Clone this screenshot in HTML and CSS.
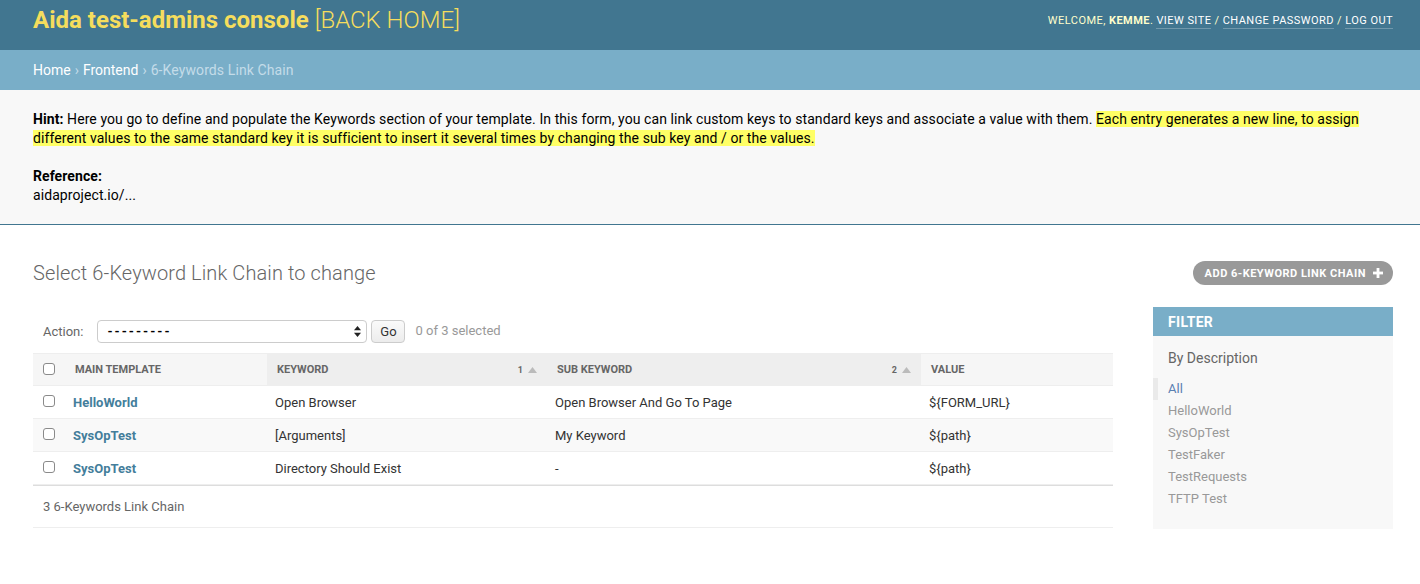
FILE: index.html
```html
<!DOCTYPE html>
<html>
<head>
<meta charset="utf-8">
<title>Select 6-Keyword Link Chain to change</title>
<link rel="stylesheet" href="styles.css">
</head>
<body>
<header class="header">
  <div class="branding"><span class="brand-bold">Aida test-admins console</span> <span class="brand-light">[BACK HOME]</span></div>
  <div class="user-tools">WELCOME, <strong>KEMME</strong>. <a href="#">VIEW SITE</a> / <a href="#">CHANGE PASSWORD</a> / <a href="#">LOG OUT</a></div>
</header>
<nav class="breadcrumbs"><a href="#">Home</a> › <a href="#">Frontend</a> › <span class="crumb-current">6-Keywords Link Chain</span></nav>
<section class="hint">
  <p><strong>Hint:</strong> Here you go to define and populate the Keywords section of your template. In this form, you can link custom keys to standard keys and associate a value with them. <mark>Each entry generates a new line, to assign different values to the same standard key it is sufficient to insert it several times by changing the sub key and / or the values.</mark></p>
  <p class="ref"><strong>Reference:</strong><br>aidaproject.io/...</p>
</section>
<main class="content">
  <div class="title-row">
    <h1>Select 6-Keyword Link Chain to change</h1>
    <a class="addlink" href="#">ADD 6-KEYWORD LINK CHAIN <svg width="10" height="10" viewBox="0 0 10 10"><rect x="3.6" y="0" width="2.8" height="10" fill="#fff"/><rect x="0" y="3.6" width="10" height="2.8" fill="#fff"/></svg></a>
  </div>
  <div class="changelist">
    <div class="results-col">
      <div class="actions">
        <label class="action-label">Action:</label>
        <div class="select-wrap">
          <span class="select-text">---------</span>
          <svg class="select-arrows" width="7" height="11" viewBox="0 0 7 11"><path d="M3.5 0 L7 4.2 L0 4.2 Z" fill="#222"/><path d="M3.5 11 L7 6.8 L0 6.8 Z" fill="#222"/></svg>
        </div>
        <button class="go">Go</button>
        <span class="counter">0 of 3 selected</span>
      </div>
      <table class="results">
        <thead>
          <tr>
            <th class="col-check"><span class="cb"></span></th>
            <th class="col-main"><div class="th-text">MAIN TEMPLATE</div></th>
            <th class="col-kw sorted"><div class="th-text th-sort"><span>KEYWORD</span><span class="sortpri">1 <svg width="9" height="6" viewBox="0 0 9 6"><path d="M4.5 0 L9 6 L0 6 Z" fill="#bbb"/></svg></span></div></th>
            <th class="col-sub sorted"><div class="th-text th-sort"><span>SUB KEYWORD</span><span class="sortpri">2 <svg width="9" height="6" viewBox="0 0 9 6"><path d="M4.5 0 L9 6 L0 6 Z" fill="#bbb"/></svg></span></div></th>
            <th class="col-val"><div class="th-text">VALUE</div></th>
          </tr>
        </thead>
        <tbody>
          <tr>
            <td class="col-check"><span class="cb"></span></td>
            <td><a href="#">HelloWorld</a></td>
            <td>Open Browser</td>
            <td>Open Browser And Go To Page</td>
            <td>${FORM_URL}</td>
          </tr>
          <tr class="row2">
            <td class="col-check"><span class="cb"></span></td>
            <td><a href="#">SysOpTest</a></td>
            <td>[Arguments]</td>
            <td>My Keyword</td>
            <td>${path}</td>
          </tr>
          <tr>
            <td class="col-check"><span class="cb"></span></td>
            <td><a href="#">SysOpTest</a></td>
            <td>Directory Should Exist</td>
            <td>-</td>
            <td>${path}</td>
          </tr>
        </tbody>
      </table>
      <p class="paginator">3 6-Keywords Link Chain</p>
    </div>
    <aside class="filter">
      <h2>FILTER</h2>
      <h3>By Description</h3>
      <ul>
        <li class="selected"><a href="#">All</a></li>
        <li><a href="#">HelloWorld</a></li>
        <li><a href="#">SysOpTest</a></li>
        <li><a href="#">TestFaker</a></li>
        <li><a href="#">TestRequests</a></li>
        <li><a href="#">TFTP Test</a></li>
      </ul>
    </aside>
  </div>
</main>
</body>
</html>
```
FILE: styles.css
```css
* { box-sizing: border-box; }
html, body { margin: 0; padding: 0; }
body {
  font-family: Roboto, "Liberation Sans", Arial, sans-serif;
  font-size: 14px;
  color: #333;
  background: #fff;
}
a { text-decoration: none; }

.header {
  height: 50px;
  background: #417690;
  display: flex;
  justify-content: space-between;
  align-items: center;
  padding: 0 27px 10px 33px;
}
.branding {
  font-size: 24px;
  line-height: 29px;
  color: #f5dd5d;
  white-space: nowrap;
}
.brand-bold { font-weight: 700; }
.brand-light { font-weight: 300; }
.user-tools {
  font-size: 11px;
  color: #ffc;
  letter-spacing: 0.45px;
  margin-top: 1px;
}
.user-tools strong { font-weight: 700; }
.user-tools a {
  color: #fff;
  border-bottom: 1px solid rgba(255,255,255,0.25);
  padding-bottom: 1px;
}

.breadcrumbs {
  height: 40px;
  background: #79aec8;
  padding: 0 33px;
  display: flex;
  align-items: center;
  gap: 4px;
  color: #c4dce8;
  font-size: 14px;
}
.breadcrumbs a { color: #fff; }
.crumb-current { color: #c4dce8; letter-spacing: 0.1px; }

.hint {
  background: #f8f8f8;
  border-bottom: 1px solid #417690;
  padding: 20px 27px 19px 33px;
  color: #000;
  font-size: 14px;
  line-height: 19px;
  letter-spacing: 0.08px;
}
.hint p { margin: 0; }
.hint .ref { margin-top: 19px; }
.hint mark { background: #ffff66; color: #000; }
.hint strong { font-weight: 700; }

.content {
  padding: 36px 27px 20px 33px;
}
.title-row {
  display: flex;
  justify-content: space-between;
  align-items: center;
  height: 24px;
}
.title-row h1 {
  margin: 0;
  font-size: 20px;
  font-weight: 300;
  color: #666;
  line-height: 24px;
  letter-spacing: 0.1px;
}
.addlink {
  display: flex;
  align-items: center;
  gap: 7px;
  height: 24px;
  padding: 0 10px 0 12px;
  background: #999;
  border-radius: 12px;
  color: #fff;
  font-size: 11px;
  font-weight: 700;
  letter-spacing: 0.5px;
}

.changelist {
  display: flex;
  gap: 40px;
  margin-top: 22px;
  align-items: flex-start;
}
.results-col { flex: 1; min-width: 0; }

.actions {
  display: flex;
  align-items: center;
  padding: 12px 10px 10px 10px;
  height: 46px;
}
.action-label {
  color: #666;
  font-size: 13px;
  margin-right: 14px;
  flex: none;
}
.select-wrap {
  position: relative;
  flex: none;
  width: 270px;
  height: 23px;
  border: 1px solid #ccc;
  border-radius: 4px;
  background: #fff;
  display: flex;
  align-items: center;
  padding-left: 9px;
  font-size: 13px;
  color: #000;
}
.select-text { letter-spacing: 2px; font-weight: 700; }
.select-arrows {
  position: absolute;
  right: 5px;
  top: 5px;
}
.go {
  flex: none;
  margin-left: 4px;
  height: 23px;
  width: 34px;
  padding: 0;
  border: 1px solid #ccc;
  border-radius: 4px;
  background: linear-gradient(#fafafa, #ececec);
  font-family: inherit;
  font-size: 13px;
  color: #333;
}
.counter {
  margin-left: 10px;
  color: #999;
  font-size: 13px;
  margin-top: -2px;
}

.results {
  width: 100%;
  border-collapse: collapse;
  font-size: 13px;
}
.results thead th {
  height: 32px;
  padding: 0;
  background: #f6f6f6;
  border-top: 1px solid #eee;
  border-bottom: 1px solid #eee;
  text-align: left;
  font-size: 11px;
  font-weight: 700;
  color: #666;
  vertical-align: middle;
}
.results thead th.sorted { background: #eee; }
.th-text { padding: 0 10px; }
.th-sort { display: flex; justify-content: space-between; align-items: center; }
.sortpri { font-size: 9px; color: #666; display: flex; align-items: center; gap: 5px; }
.col-check { width: 32px; }
.col-main { width: 202px; }
.col-kw { width: 280px; }
.col-sub { width: 374px; }
.col-val { width: auto; }
.results td {
  height: 33px;
  padding: 0 8px;
  border-bottom: 1px solid #eee;
  color: #333;
  vertical-align: middle;
}
.results th.col-check, .results td.col-check { padding: 0 0 0 10px; }
.results td a { color: #447e9b; font-weight: 700; }
.results tr.row2 td { background: #f9f9f9; }
.cb {
  display: block;
  width: 12px;
  height: 12px;
  border: 1px solid #8a8a8a;
  border-radius: 3px;
  background: #fff;
  margin-top: -2px;
}

.paginator {
  margin: 0;
  border-top: 1px solid #ddd;
  border-bottom: 1px solid #eee;
  height: 43px;
  display: flex;
  align-items: center;
  padding-left: 10px;
  color: #666;
  font-size: 13px;
}

.filter {
  width: 240px;
  flex: none;
  background: #f8f8f8;
  padding-bottom: 19px;
}
.filter h2 {
  margin: 0;
  height: 29px;
  background: #79aec8;
  color: #fff;
  font-size: 14px;
  font-weight: 700;
  padding: 0 15px;
  display: flex;
  align-items: center;
  letter-spacing: 0.3px;
}
.filter h3 {
  margin: 13px 15px 0;
  font-size: 14px;
  font-weight: 400;
  color: #666;
  line-height: 18px;
}
.filter ul {
  list-style: none;
  margin: 11px 0 0;
  padding: 0;
}
.filter li {
  font-size: 13px;
  line-height: 22px;
  padding-left: 15px;
}
.filter li a { color: #999; }
.filter li.selected {
  border-left: 5px solid #eaeaea;
  padding-left: 10px;
}
.filter li.selected a { color: #5b80b2; }
```
